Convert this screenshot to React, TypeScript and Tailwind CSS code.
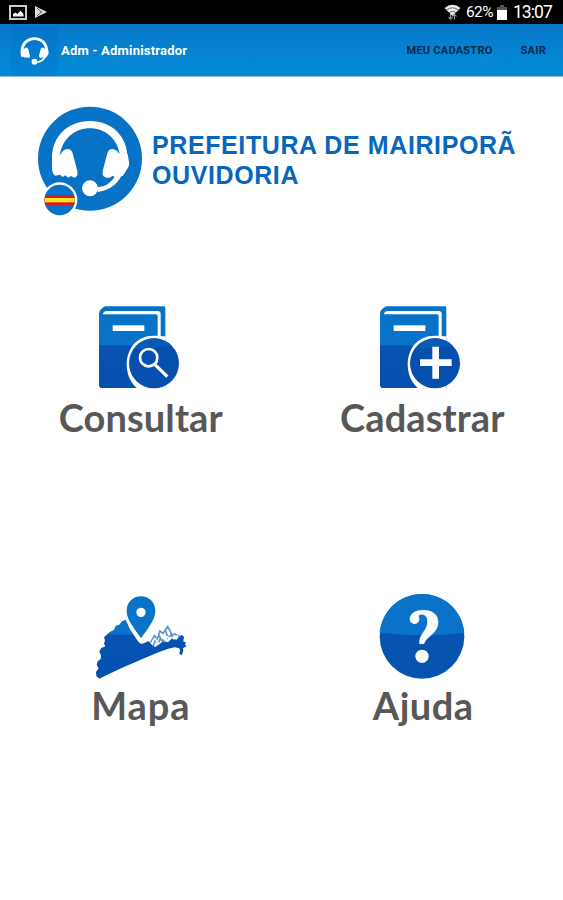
import React from "react";

type Tile = {
  label: string;
  labelClass: string;
  icon: React.ReactNode;
};

// headset glyph, used in the app bar and in the big logo
function Headset() {
  return (
    <g fill="#fff">
      <path d="M66 192C64 120 115 75 180 75s114 45 113 117l-24-16c-6-48-44-79-89-79s-83 31-90 79z" />
      <path d="M66 178V215Q66 232 76 239L90 236 98 243 106 238 115 245 122 240 134 245Q145 242 142 225L128 172Q124 159 112 159C103 159 97 166 94 172L89 178Z" />
      <path d="M293 175L297 198C299 214 290 220 286 228L278 240 264 238 256 244 248 239 239 245 229 245Q215 242 218 225L232 172Q236 159 247 159C257 159 263 166 266 172Z" />
      <path d="M281 226c-15 38-42 57-77 62l-3-14c30-2 47-18 59-42z" />
      <circle cx="180" cy="277" r="24" />
    </g>
  );
}

function Shade({ id, split }: { id: string; split: number }) {
  return (
    <linearGradient id={id} gradientUnits="userSpaceOnUse" x1="0" y1="25" x2="0" y2="285">
      <stop offset="0" stopColor="#0872c4" />
      <stop offset={split} stopColor="#0874ca" />
      <stop offset={split + 0.01} stopColor="#0653b0" />
      <stop offset="1" stopColor="#0450b0" />
    </linearGradient>
  );
}

function Book({ id, children }: { id: string; children: React.ReactNode }) {
  return (
    <svg className="h-[88px] w-[100px]" viewBox="124 24 300 264">
      <defs>
        <Shade id={id} split={0.48} />
        <clipPath id={`${id}-badge`}>
          <circle cx="313" cy="205" r="75" />
        </clipPath>
      </defs>
      <path
        d="M166 34h177q4 0 4 5v240H158q-10 0-10-10V56q0-12 18-22z"
        fill={`url(#${id})`}
      />
      <path d="M160 55q4-7 12-7h152q9 0 9 9v80h-9V63q0-5-5-5H160z" fill="#fff" />
      <rect x="189" y="91" width="95" height="17" fill="#fff" />
      <path d="M347 124v160h-79c-24-15-37-45-37-76 0-50 33-86 80-86 14 0 25 1 36 2z" fill="#fff" />
      <circle cx="313" cy="205" r="75" fill="#064fac" />
      <path d="M230 120h170v30q-80 8-170 16z" fill="#075bb5" clipPath={`url(#${id}-badge)`} />
      {children}
    </svg>
  );
}

function MapIcon() {
  return (
    <svg className="h-[88px] w-[100px]" viewBox="33 18 300 264">
      <defs>
        <Shade id="map" split={0.47} />
      </defs>
      <path
        d="M140 103L126 109 118 119 107 122 102 134 88 142 72 157 75 166 72 176 76 184 63 190 58 200 63 211 62 222 53 229 50 240 56 250 48 261 49 273 58 281 74 273 130 247 186 223 230 204 262 192 284 187 298 190 300 198 298 206 305 211 310 197 309 190 320 183 315 179 318 172 310 170 312 155 305 150 298 154 290 164 276 160 264 172 250 168 238 178 226 186 214 178 206 168 188 176Z"
        fill="url(#map)"
      />
      {/* mountain peaks */}
      <path
        d="M212 172l11-20 9 9 8-23 9 7 14-20 8 14 5 12 8-4 15 7M219 184l5-16 11 6 7-16 14 14M236 150l12 20M257 137l7 22 11-11M280 164l-4-12"
        fill="none"
        stroke="#5a92d2"
        strokeWidth="5"
      />
      <path
        d="M216 178l5-14M229 168l8 8M244 151l4 12M260 154l9 7M277 157l8 5M292 150l-1 8"
        fill="none"
        stroke="#fff"
        strokeWidth="5"
      />
      <path d="M134 98l17 36 24 36 9 8 22-38z" fill="#fff" />
      <path d="M183 34c-25 0-43 19-43 44 0 27 25 54 43 82 19-28 43-55 43-82 0-25-18-44-43-44z" fill="#0873c7" />
      <circle cx="183" cy="82" r="14" fill="#fff" />
    </svg>
  );
}

function HelpIcon() {
  return (
    <svg className="h-[88px] w-[100px]" viewBox="37 18 300 264">
      <circle cx="187" cy="154" r="127" fill="#0653b0" />
      <path d="M60 143C66 77 120 27 187 27s121 50 127 116c-80 10-170 10-254 0z" fill="#0873c8" />
      <path
        d="M151 103c0-17 17-27 40-27 28 0 44 14 44 36 0 18-11 31-25 42-11 9-15 15-17 22h-13c-2-12 4-24 12-35 8-11 12-19 12-31 0-14-7-22-19-22-5 0-8 2-9 5 2 3 2 7 2 10 0 8-6 13-13 13s-14-4-14-13z"
        fill="#fff"
        stroke="#fff"
        strokeWidth="2"
      />
      <circle cx="187" cy="214" r="20" fill="#fff" />
    </svg>
  );
}

const tiles: Tile[] = [
  {
    label: "Consultar",
    labelClass: "tracking-[0.1px]",
    icon: (
      <Book id="consultar">
        <circle cx="297" cy="188" r="26" fill="none" stroke="#fff" strokeWidth="8" />
        <path d="M316 209l37 36" stroke="#fff" strokeWidth="10" />
      </Book>
    ),
  },
  {
    label: "Cadastrar",
    labelClass: "tracking-[0.1px]",
    icon: (
      <Book id="cadastrar">
        <path d="M305 155h20v38h38v20h-38v38h-20v-38h-37v-20h37z" fill="#fff" />
      </Book>
    ),
  },
  { label: "Mapa", labelClass: "tracking-[0.9px]", icon: <MapIcon /> },
  { label: "Ajuda", labelClass: "pl-[2px] tracking-[0.5px]", icon: <HelpIcon /> },
];

export default function App() {
  return (
    <div className="flex h-[900px] w-[563px] flex-col overflow-hidden bg-white font-['Roboto',sans-serif]">
      {/* status bar */}
      <div className="flex h-6 items-center justify-between bg-black pl-[9px] pr-[11px] text-white">
        <div className="flex items-center gap-[7px]">
          <svg className="h-[15px] w-[18px]" viewBox="0 0 18 15">
            <rect x="1" y="1" width="16" height="13" fill="none" stroke="#ccc" strokeWidth="2" />
            <path d="M4 11.500V9l2.500-1.500 2 1.500 3-3.500 3 3.500v2.500z" fill="#fff" />
          </svg>
          <svg className="h-[14px] w-[14px]" viewBox="0 0 14 14">
            <path d="M1 1l12 6-12 6z" fill="#ddd" />
            <path d="M3 3l5 4.500M3 11l5-4.500" stroke="#555" strokeWidth="1" />
          </svg>
        </div>
        <div className="flex items-center">
          <svg className="h-[18px] w-[17px]" viewBox="0 0 17 18">
            <path d="M.5 5q8-6.500 16 0L8.500 13z" fill="#eee" />
            <path d="M2.500 7q6-4.500 12 0M5 9.500q3.500-2.500 7 0" fill="none" stroke="#444" strokeWidth=".8" />
            <path d="M6.500 11v5m-2-2l2 2.200 2-2.200M10.500 16.500v-5m-2 2l2-2.200 2 2.200" fill="none" stroke="#999" strokeWidth="1.100" />
          </svg>
          <span className="ml-[5px] text-[15.500px] leading-6 tracking-[-0.6px]">62%</span>
          <svg className="ml-[4px] h-[15px] w-[10px]" viewBox="0 0 10 15">
            <path d="M3 0h4v2h3v3H0V2h3z" fill="#555" />
            <path d="M0 5h10v10H0z" fill="#fff" />
          </svg>
          <span className="ml-[6px] text-[17.500px] leading-6 tracking-[-0.9px]">13:07</span>
        </div>
      </div>

      {/* app bar */}
      <div className="flex h-[53px] items-center border-b border-[#8cbce0] bg-gradient-to-b from-[#0878ca] to-[#028cd6] pl-[11px] pr-[17px] pt-[2px]">
        <div className="flex h-[50px] w-[47px] items-center justify-center bg-gradient-to-b from-[#0475c9] to-[#0484d1]">
          <svg className="h-[28px] w-[29px]" viewBox="60 72 240 232">
            <Headset />
          </svg>
        </div>
        <span className="ml-[3px] text-[13px] font-bold tracking-[0.2px] text-white">
          Adm - Administrador
        </span>
        <div className="ml-auto flex gap-[28px] text-[11px] font-bold tracking-[0.25px] text-[#062a4a]">
          <span>MEU CADASTRO</span>
          <span>SAIR</span>
        </div>
      </div>

      {/* logo and title */}
      <div className="flex h-[226px] items-start pl-[30px] pt-[19px]">
        <svg className="h-[130px] w-[122px] shrink-0" viewBox="0 0 366 390">
          <circle cx="180" cy="188" r="156" fill="#0872c6" />
          <Headset />
          <circle cx="89" cy="312" r="53" fill="#fff" />
          <circle cx="89" cy="312" r="46" fill="#0872c6" />
          <path d="M46 297h86q5 15 0 31H46q-5-16 0-31z" fill="#d81a20" />
          <path d="M44 306h90v13H44z" fill="#ffe51a" />
        </svg>
        <h1 className="pt-[34px] font-['Liberation_Sans',sans-serif] text-[25px] font-bold leading-[30px] tracking-[0.6px] text-[#0866bd]">
          PREFEITURA DE MAIRIPORÃ
          <br />
          OUVIDORIA
        </h1>
      </div>

      {/* menu */}
      <div className="grid grid-cols-2">
        {tiles.map((tile) => (
          <button key={tile.label} className="flex h-[288px] flex-col items-center">
            {tile.icon}
            <span
              className={`mt-[2px] font-['Lato',sans-serif] text-[38px] font-bold leading-[48px] text-[#585858] ${tile.labelClass}`}
            >
              {tile.label}
            </span>
          </button>
        ))}
      </div>
    </div>
  );
}
